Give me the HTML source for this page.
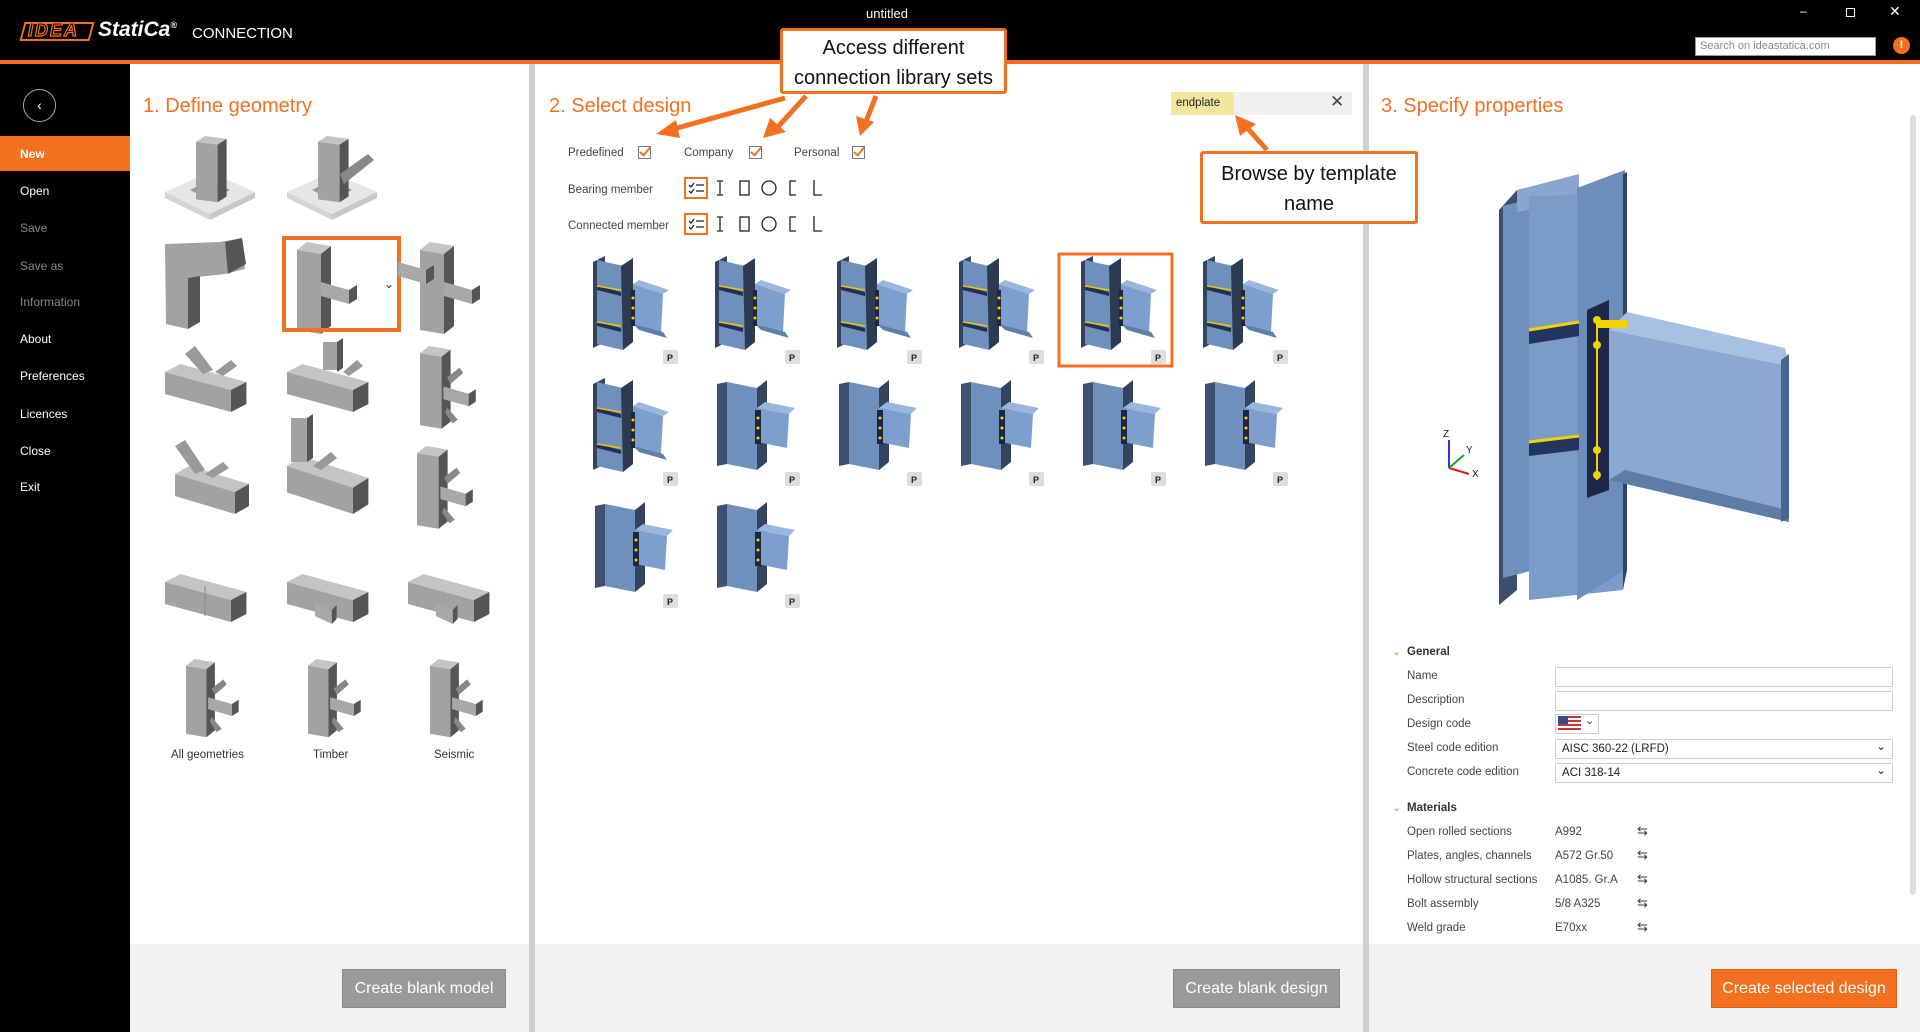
<!DOCTYPE html>
<html><head><meta charset="utf-8">
<style>
*{margin:0;padding:0;box-sizing:border-box}
body{width:1920px;height:1032px;position:relative;overflow:hidden;background:#fff;font-family:"Liberation Sans",sans-serif;font-size:12px;color:#333}
.a{position:absolute}
.side{left:0;top:64px;width:130px;height:968px;background:#000}
.side div{position:absolute;left:20px;color:#fff;font-size:12px}
.side div.dim{color:#888}
h2{position:absolute;font-weight:normal;font-size:20px;color:#f37021}
.btn{position:absolute;height:39px;background:#9a9a9a;border:1px solid #888;color:#fff;font-size:16px;text-align:center;line-height:37px}
.lbl{position:absolute;font-size:11.5px;color:#444}
.cb{position:absolute;width:13px;height:13px;border:1px solid #777;background:#fff}
.cb:after{content:"";position:absolute;left:3px;top:-2px;width:4px;height:9px;border-right:2px solid #f37021;border-bottom:2px solid #f37021;transform:rotate(40deg)}
.call{position:absolute;border:3px solid #f37021;background:#fff;border-radius:3px;text-align:center;font-size:20px;color:#111;line-height:30px}
.inp{position:absolute;left:1555px;width:338px;height:20px;border:1px solid #ccc;background:#fff;font-size:11.5px;line-height:18px;padding-left:6px;color:#222}
.pl{position:absolute;left:1407px;font-size:11.5px;color:#444}
.pv{position:absolute;left:1555px;font-size:11.5px;color:#444}
.sw{position:absolute;left:1637px;font-size:13px;color:#333}
</style></head><body>
<div class="a" style="left:0;top:0;width:1920px;height:60px;background:#000"></div>
<div class="a" style="left:0;top:60px;width:1920px;height:4px;background:#f37021"></div>
<div class="a" style="left:22px;top:22px;width:70px;height:19px;border:2px solid #f37021;transform:skewX(-15deg)"></div>
<div class="a" style="left:28px;top:20px;font-size:18px;font-weight:bold;font-style:italic;color:#000;-webkit-text-stroke:1.2px #f37021;letter-spacing:2px">IDEA</div>
<div class="a" style="left:98px;top:18px;font-size:21px;font-weight:bold;font-style:italic;color:#fff">StatiCa<sup style="font-size:9px">®</sup></div>
<div class="a" style="left:192px;top:25px;font-size:15px;color:#fff">CONNECTION</div>
<div class="a" style="left:866px;top:6px;font-size:13px;color:#fff">untitled</div>
<div class="a" style="left:1800px;top:4px;color:#fff;font-size:12px">–</div>
<div class="a" style="left:1846px;top:8px;width:9px;height:9px;border:1px solid #fff"></div>
<div class="a" style="left:1889px;top:3px;color:#fff;font-size:14px">✕</div>
<div class="a" style="left:1695px;top:37px;width:181px;height:19px;background:#fff;border:1px solid #999;font-size:11px;color:#888;line-height:17px;padding-left:4px">Search on ideastatica.com</div>
<div class="a" style="left:1893px;top:37px;width:17px;height:17px;border-radius:50%;background:#f37021;color:#fff;font-size:11px;font-weight:bold;text-align:center;line-height:17px">!</div>
<div class="a side">
<span class="a" style="left:23px;top:25px;width:33px;height:33px;border:1px solid #aaa;border-radius:50%;color:#fff;text-align:center;line-height:30px;font-size:14px">‹</span>
<span class="a" style="left:0;top:72px;width:130px;height:35px;background:#f37021"></span>
<div style="top:83px;font-weight:bold">New</div>
<div style="top:120px">Open</div>
<div class="dim" style="top:157px">Save</div>
<div class="dim" style="top:195px">Save as</div>
<div class="dim" style="top:231px">Information</div>
<div style="top:268px">About</div>
<div style="top:305px">Preferences</div>
<div style="top:343px">Licences</div>
<div style="top:380px">Close</div>
<div style="top:416px">Exit</div>
</div>
<div class="a" style="left:529px;top:64px;width:6px;height:968px;background:#cfcfcf"></div>
<div class="a" style="left:1363px;top:64px;width:6px;height:968px;background:#cfcfcf"></div>
<div class="a" style="left:130px;top:944px;width:399px;height:88px;background:#f2f2f2"></div>
<div class="a" style="left:535px;top:944px;width:828px;height:88px;background:#f2f2f2"></div>
<div class="a" style="left:1369px;top:944px;width:551px;height:88px;background:#f2f2f2"></div>
<div class="a" style="left:1910px;top:115px;width:6px;height:780px;background:#ddd;border-radius:3px"></div>
<div class="btn" style="left:342px;top:969px;width:164px">Create blank model</div>
<div class="btn" style="left:1173px;top:969px;width:167px">Create blank design</div>
<div class="btn" style="left:1711px;top:969px;width:186px;background:#f37021;border-color:#d96010">Create selected design</div>
<h2 style="left:143px;top:95px">1. Define geometry</h2>
<h2 style="left:549px;top:95px">2. Select design</h2>
<h2 style="left:1381px;top:95px">3. Specify properties</h2>

<svg class="a" style="left:130px;top:64px" width="399" height="880">
<defs>
<g id="col"><polygon points="0,8 10,0 34,4 24,12" fill="#c4c4c4"/><polygon points="0,8 24,12 24,92 0,88" fill="#a2a2a2"/><polygon points="24,12 34,4 34,84 24,92" fill="#555"/></g>
<g id="bx"><polygon points="0,0 60,18 60,40 0,22" fill="#a2a2a2"/><polygon points="0,0 14,-8 74,10 60,18" fill="#c4c4c4"/><polygon points="60,18 74,10 74,32 60,40" fill="#555"/></g>
<g id="st"><polygon points="0,0 28,8 28,22 0,14" fill="#a8a8a8"/><polygon points="28,8 36,3 36,17 28,22" fill="#555"/></g>
<g id="fan"><use href="#col"/><g transform="translate(26,45)"><use href="#st"/></g><polygon points="30,35 44,24 48,30 34,42" fill="#888"/><polygon points="30,68 42,82 36,86 28,74" fill="#888"/></g>
</defs>
<polygon points="35,128 80,108 125,128 80,150" fill="#e6e6e6"/><polygon points="35,128 80,150 80,156 35,134" fill="#d4d4d4"/><polygon points="80,150 125,128 125,134 80,156" fill="#c8c8c8"/><polygon points="60,126 80,116 100,126 80,136" fill="#999"/><g transform="translate(66,72)"><use href="#col" transform="scale(0.9,0.72)"/></g>
<polygon points="157,128 202,108 247,128 202,150" fill="#e6e6e6"/><polygon points="157,128 202,150 202,156 157,134" fill="#d4d4d4"/><polygon points="202,150 247,128 247,134 202,156" fill="#c8c8c8"/><polygon points="182,126 202,116 222,126 202,136" fill="#999"/><g transform="translate(188,72)"><use href="#col" transform="scale(0.9,0.72)"/></g><polygon points="210,110 238,90 244,96 214,120" fill="#888"/>
<polygon points="35,180 90,178 112,174 115,205 95,210 58,214 58,265 36,260" fill="#a2a2a2"/><polygon points="58,214 70,212 70,258 58,265" fill="#555"/><polygon points="95,178 112,174 116,200 98,210" fill="#555"/>
<g transform="translate(167,178)"><use href="#col"/><g transform="translate(24,40)"><use href="#st"/></g></g>
<rect x="154" y="174" width="115" height="92" fill="none" stroke="#f37021" stroke-width="4"/>
<text x="254" y="224" font-size="12" fill="#333">⌄</text>
<g transform="translate(290,178)"><use href="#col"/><g transform="translate(24,40)"><use href="#st"/></g><g transform="translate(-22,20)"><use href="#st"/></g></g>
<g transform="translate(35,308)"><use href="#bx" transform="scale(1.1,1)"/><polygon points="20,-18 30,-26 48,-2 38,2" fill="#999"/><polygon points="50,0 66,-12 72,-6 58,4" fill="#999"/></g>
<g transform="translate(157,308)"><use href="#bx" transform="scale(1.1,1)"/><rect x="36" y="-30" width="14" height="28" fill="#a2a2a2"/><polygon points="50,-30 56,-34 56,-4 50,0" fill="#555"/><polygon points="56,0 70,-12 76,-6 62,4" fill="#999"/></g>
<g transform="translate(290,282) scale(0.9,0.9)"><use href="#fan"/></g>
<g transform="translate(45,410)"><use href="#bx"/><polygon points="0,-28 10,-34 30,-4 20,0" fill="#999"/><polygon points="30,0 48,-12 54,-6 38,4" fill="#999"/></g>
<g transform="translate(157,402)"><use href="#bx" transform="scale(1.1,1.2)"/><rect x="4" y="-48" width="16" height="44" fill="#a2a2a2"/><polygon points="20,-48 26,-52 26,-8 20,-4" fill="#555"/><polygon points="26,0 44,-14 50,-8 34,4" fill="#999"/></g>
<g transform="translate(287,382) scale(0.9,0.9)"><use href="#fan"/></g>
<g transform="translate(35,518)"><use href="#bx" transform="scale(1.1,1)"/><line x1="40" y1="4" x2="40" y2="34" stroke="#888"/></g>
<g transform="translate(157,518)"><use href="#bx" transform="scale(1.1,1)"/><g transform="translate(28,20)"><use href="#st" transform="scale(0.6,1)"/></g></g>
<g transform="translate(278,518)"><use href="#bx" transform="scale(1.1,1)"/><g transform="translate(28,20)"><use href="#st" transform="scale(0.6,1)"/></g></g>
<g transform="translate(56,595) scale(0.85,0.85)"><use href="#fan"/></g>
<g transform="translate(178,595) scale(0.85,0.85)"><use href="#fan"/></g>
<g transform="translate(300,595) scale(0.85,0.85)"><use href="#fan"/></g>
<text x="41" y="694" font-size="11.5" fill="#333">All geometries</text>
<text x="183" y="694" font-size="11.5" fill="#333">Timber</text>
<text x="304" y="694" font-size="11.5" fill="#333">Seismic</text>
</svg>

<div class="lbl" style="left:568px;top:147px">Predefined</div><div class="cb" style="left:638px;top:146px"></div>
<div class="lbl" style="left:684px;top:147px">Company</div><div class="cb" style="left:749px;top:146px"></div>
<div class="lbl" style="left:794px;top:147px">Personal</div><div class="cb" style="left:852px;top:146px"></div>
<div class="lbl" style="left:568px;top:184px">Bearing member</div>
<div class="lbl" style="left:568px;top:220px">Connected member</div>
<svg class="a" style="left:684px;top:177px" width="150" height="64">
<g id="tools" fill="none" stroke="#222" stroke-width="1.3">
<rect x="1" y="1" width="22" height="20" stroke="#f37021" stroke-width="2"/>
<path d="M5 8l2 2 3-4M5 14l2 2 3-4M12 8h8M12 14h8"/>
<path d="M33 4h6M36 4v14M33 18h6"/>
<rect x="56" y="4" width="9" height="14"/>
<circle cx="85" cy="11" r="7"/>
<path d="M112 4h-6v14h6"/>
<path d="M130 3v15h8"/>
</g>
<use href="#tools" y="36"/>
</svg>
<svg class="a" style="left:535px;top:240px" width="828" height="380">
<defs>
<g id="th">
<polygon points="58,22 70,16 70,102 58,108" fill="#34435e"/>
<polygon points="62,20 88,26 88,110 62,104" fill="#6f8fbc"/>
<polygon points="86,26 98,18 98,102 88,110" fill="#2c3a52"/>
<polygon points="62,46 86,52 86,56 62,50" fill="#222f55"/><line x1="62" y1="46" x2="86" y2="50" stroke="#e8c800" stroke-width="1.5"/>
<polygon points="62,82 86,88 86,92 62,86" fill="#222f55"/><line x1="62" y1="82" x2="86" y2="86" stroke="#e8c800" stroke-width="1.5"/>
<polygon points="98,44 128,54 126,92 98,84" fill="#7d9fce"/>
<polygon points="98,44 104,40 134,50 128,54" fill="#9ab6dc"/>
<polygon points="98,84 128,92 132,98 104,90" fill="#5f7fa8"/>
<rect x="96" y="50" width="4" height="36" fill="#1b2544"/><circle cx="98" cy="58" r="1.5" fill="#ffd000"/><circle cx="98" cy="68" r="1.5" fill="#ffd000"/><circle cx="98" cy="78" r="1.5" fill="#ffd000"/>
</g>
<g id="tb">
<polygon points="70,20 100,26 100,108 70,102" fill="#6f8fbc"/>
<polygon points="100,26 110,18 110,100 100,108" fill="#34435e"/>
<polygon points="60,22 70,20 70,102 60,104" fill="#3f5070"/>
<polygon points="100,46 132,52 130,86 100,80" fill="#7d9fce"/>
<polygon points="100,46 108,40 138,46 132,52" fill="#9ab6dc"/>
<rect x="98" y="48" width="6" height="34" fill="#1b2544"/><circle cx="101" cy="56" r="1.5" fill="#ffd000"/><circle cx="101" cy="66" r="1.5" fill="#ffd000"/><circle cx="101" cy="76" r="1.5" fill="#ffd000"/>
</g>
<g id="pb"><rect x="0" y="0" width="15" height="14" rx="2" fill="#ddd"/><text x="4" y="11" font-size="9" font-weight="bold" fill="#222">P</text></g>
</defs>
<use href="#th" x="0" y="0"/><use href="#pb" x="128" y="110"/>
<use href="#th" x="122" y="0"/><use href="#pb" x="250" y="110"/>
<use href="#th" x="244" y="0"/><use href="#pb" x="372" y="110"/>
<use href="#th" x="366" y="0"/><use href="#pb" x="494" y="110"/>
<use href="#th" x="488" y="0"/><use href="#pb" x="616" y="110"/>
<use href="#th" x="610" y="0"/><use href="#pb" x="738" y="110"/>
<rect x="524" y="14" width="113" height="112" fill="none" stroke="#f37021" stroke-width="3"/>
<use href="#th" x="0" y="122"/><use href="#pb" x="128" y="232"/>
<use href="#tb" x="122" y="122"/><use href="#pb" x="250" y="232"/>
<use href="#tb" x="244" y="122"/><use href="#pb" x="372" y="232"/>
<use href="#tb" x="366" y="122"/><use href="#pb" x="494" y="232"/>
<use href="#tb" x="488" y="122"/><use href="#pb" x="616" y="232"/>
<use href="#tb" x="610" y="122"/><use href="#pb" x="738" y="232"/>
<use href="#tb" x="0" y="244"/><use href="#pb" x="128" y="354"/>
<use href="#tb" x="122" y="244"/><use href="#pb" x="250" y="354"/>
</svg>
<div class="a" style="left:1171px;top:92px;width:181px;height:23px;background:#f0f0f0"></div>
<div class="a" style="left:1171px;top:92px;width:63px;height:23px;background:#f3e7a0;font-size:11.5px;line-height:23px;padding-left:5px;color:#222">endplate</div>
<div class="a" style="left:1330px;top:92px;font-size:17px;color:#444">✕</div>
<div class="call" style="left:780px;top:28px;width:227px;height:66px;padding-top:2px">Access different<br>connection library sets</div>
<div class="call" style="left:1200px;top:151px;width:218px;height:73px;padding-top:5px">Browse by template<br>name</div>
<svg class="a" style="left:0;top:0" width="1920" height="260" fill="none" stroke="#f37021" stroke-width="5">
<path d="M785 98L670 130"/><path d="M806 96L775 130"/><path d="M876 96L865 124"/><path d="M1267 150L1242 122"/>
<g fill="#f37021" stroke="none">
<polygon points="656,134 676,120 680,138"/><polygon points="763,138 770,118 786,132"/><polygon points="860,136 856,116 874,122"/><polygon points="1235,115 1256,124 1240,136"/>
</g></svg>
<svg class="a" style="left:1369px;top:150px" width="540" height="470">
<polygon points="130,60 148,40 148,440 130,455" fill="#3e4f6e"/>
<polygon points="134,56 165,48 165,420 134,428" fill="#6f8fbc"/>
<polygon points="148,40 210,24 210,50 148,62" fill="#8aa6cf"/>
<polygon points="160,46 254,44 254,440 160,450" fill="#7b9bc8"/>
<polygon points="208,38 256,20 256,420 208,450" fill="#6d8dba"/>
<polygon points="254,24 258,22 258,420 254,440" fill="#34435e"/>
<polygon points="160,180 210,172 210,186 160,194" fill="#243460"/><line x1="160" y1="180" x2="210" y2="172" stroke="#f2d400" stroke-width="3"/>
<polygon points="160,292 210,286 210,300 160,306" fill="#243460"/><line x1="160" y1="292" x2="210" y2="286" stroke="#f2d400" stroke-width="3"/>
<polygon points="218,160 240,150 240,340 218,348" fill="#1d2848"/>
<line x1="228" y1="172" x2="228" y2="330" stroke="#f2d400" stroke-width="2"/>
<polygon points="240,180 420,216 420,372 240,330" fill="#8aa8d2"/>
<polygon points="240,180 258,162 416,198 420,216" fill="#a8c0e2"/>
<polygon points="240,330 256,320 418,360 420,372" fill="#5d7ca6"/>
<polygon points="412,210 420,204 420,368 412,372" fill="#4a6690"/>
<g fill="#f2d400"><circle cx="228" cy="170" r="4"/><circle cx="228" cy="195" r="4"/><circle cx="228" cy="300" r="4"/><circle cx="228" cy="325" r="4"/><rect x="228" y="170" width="30" height="8"/></g>
<g stroke-width="2"><line x1="80" y1="318" x2="80" y2="290" stroke="#1a3de0"/><line x1="80" y1="318" x2="95" y2="305" stroke="#1aa030"/><line x1="80" y1="318" x2="100" y2="324" stroke="#e01a1a"/></g>
<text x="74" y="287" font-size="10" fill="#222">Z</text><text x="97" y="303" font-size="10" fill="#222">Y</text><text x="103" y="327" font-size="10" fill="#222">X</text>
</svg>
<div class="a" style="left:1392px;top:645px;color:#f37021;font-size:11px">⌄</div>
<div class="pl" style="top:646px;font-weight:bold;color:#333">General</div>
<div class="pl" style="top:670px">Name</div><div class="inp" style="top:667px"></div>
<div class="pl" style="top:694px">Description</div><div class="inp" style="top:691px"></div>
<div class="pl" style="top:718px">Design code</div>
<div class="a" style="left:1555px;top:714px;width:44px;height:20px;border:1px solid #ccc;background:#fff"></div>
<div class="a" style="left:1558px;top:716px;width:23px;height:15px;background:repeating-linear-gradient(#c33 0 2px,#fff 2px 4px)"></div>
<div class="a" style="left:1558px;top:716px;width:10px;height:8px;background:#3a4a8a"></div>
<div class="a" style="left:1585px;top:714px;font-size:11px">⌄</div>
<div class="pl" style="top:742px">Steel code edition</div><div class="inp" style="top:739px">AISC 360-22 (LRFD)<span style="position:absolute;right:6px;top:-2px">⌄</span></div>
<div class="pl" style="top:766px">Concrete code edition</div><div class="inp" style="top:763px">ACI 318-14<span style="position:absolute;right:6px;top:-2px">⌄</span></div>
<div class="a" style="left:1392px;top:801px;color:#f37021;font-size:11px">⌄</div>
<div class="pl" style="top:802px;font-weight:bold;color:#333">Materials</div>
<div class="pl" style="top:826px">Open rolled sections</div><div class="pv" style="top:826px">A992</div><div class="sw" style="top:823px">⇆</div>
<div class="pl" style="top:850px">Plates, angles, channels</div><div class="pv" style="top:850px">A572 Gr.50</div><div class="sw" style="top:847px">⇆</div>
<div class="pl" style="top:874px">Hollow structural sections</div><div class="pv" style="top:874px">A1085. Gr.A</div><div class="sw" style="top:871px">⇆</div>
<div class="pl" style="top:898px">Bolt assembly</div><div class="pv" style="top:898px">5/8 A325</div><div class="sw" style="top:895px">⇆</div>
<div class="pl" style="top:922px">Weld grade</div><div class="pv" style="top:922px">E70xx</div><div class="sw" style="top:919px">⇆</div>
</body></html>
